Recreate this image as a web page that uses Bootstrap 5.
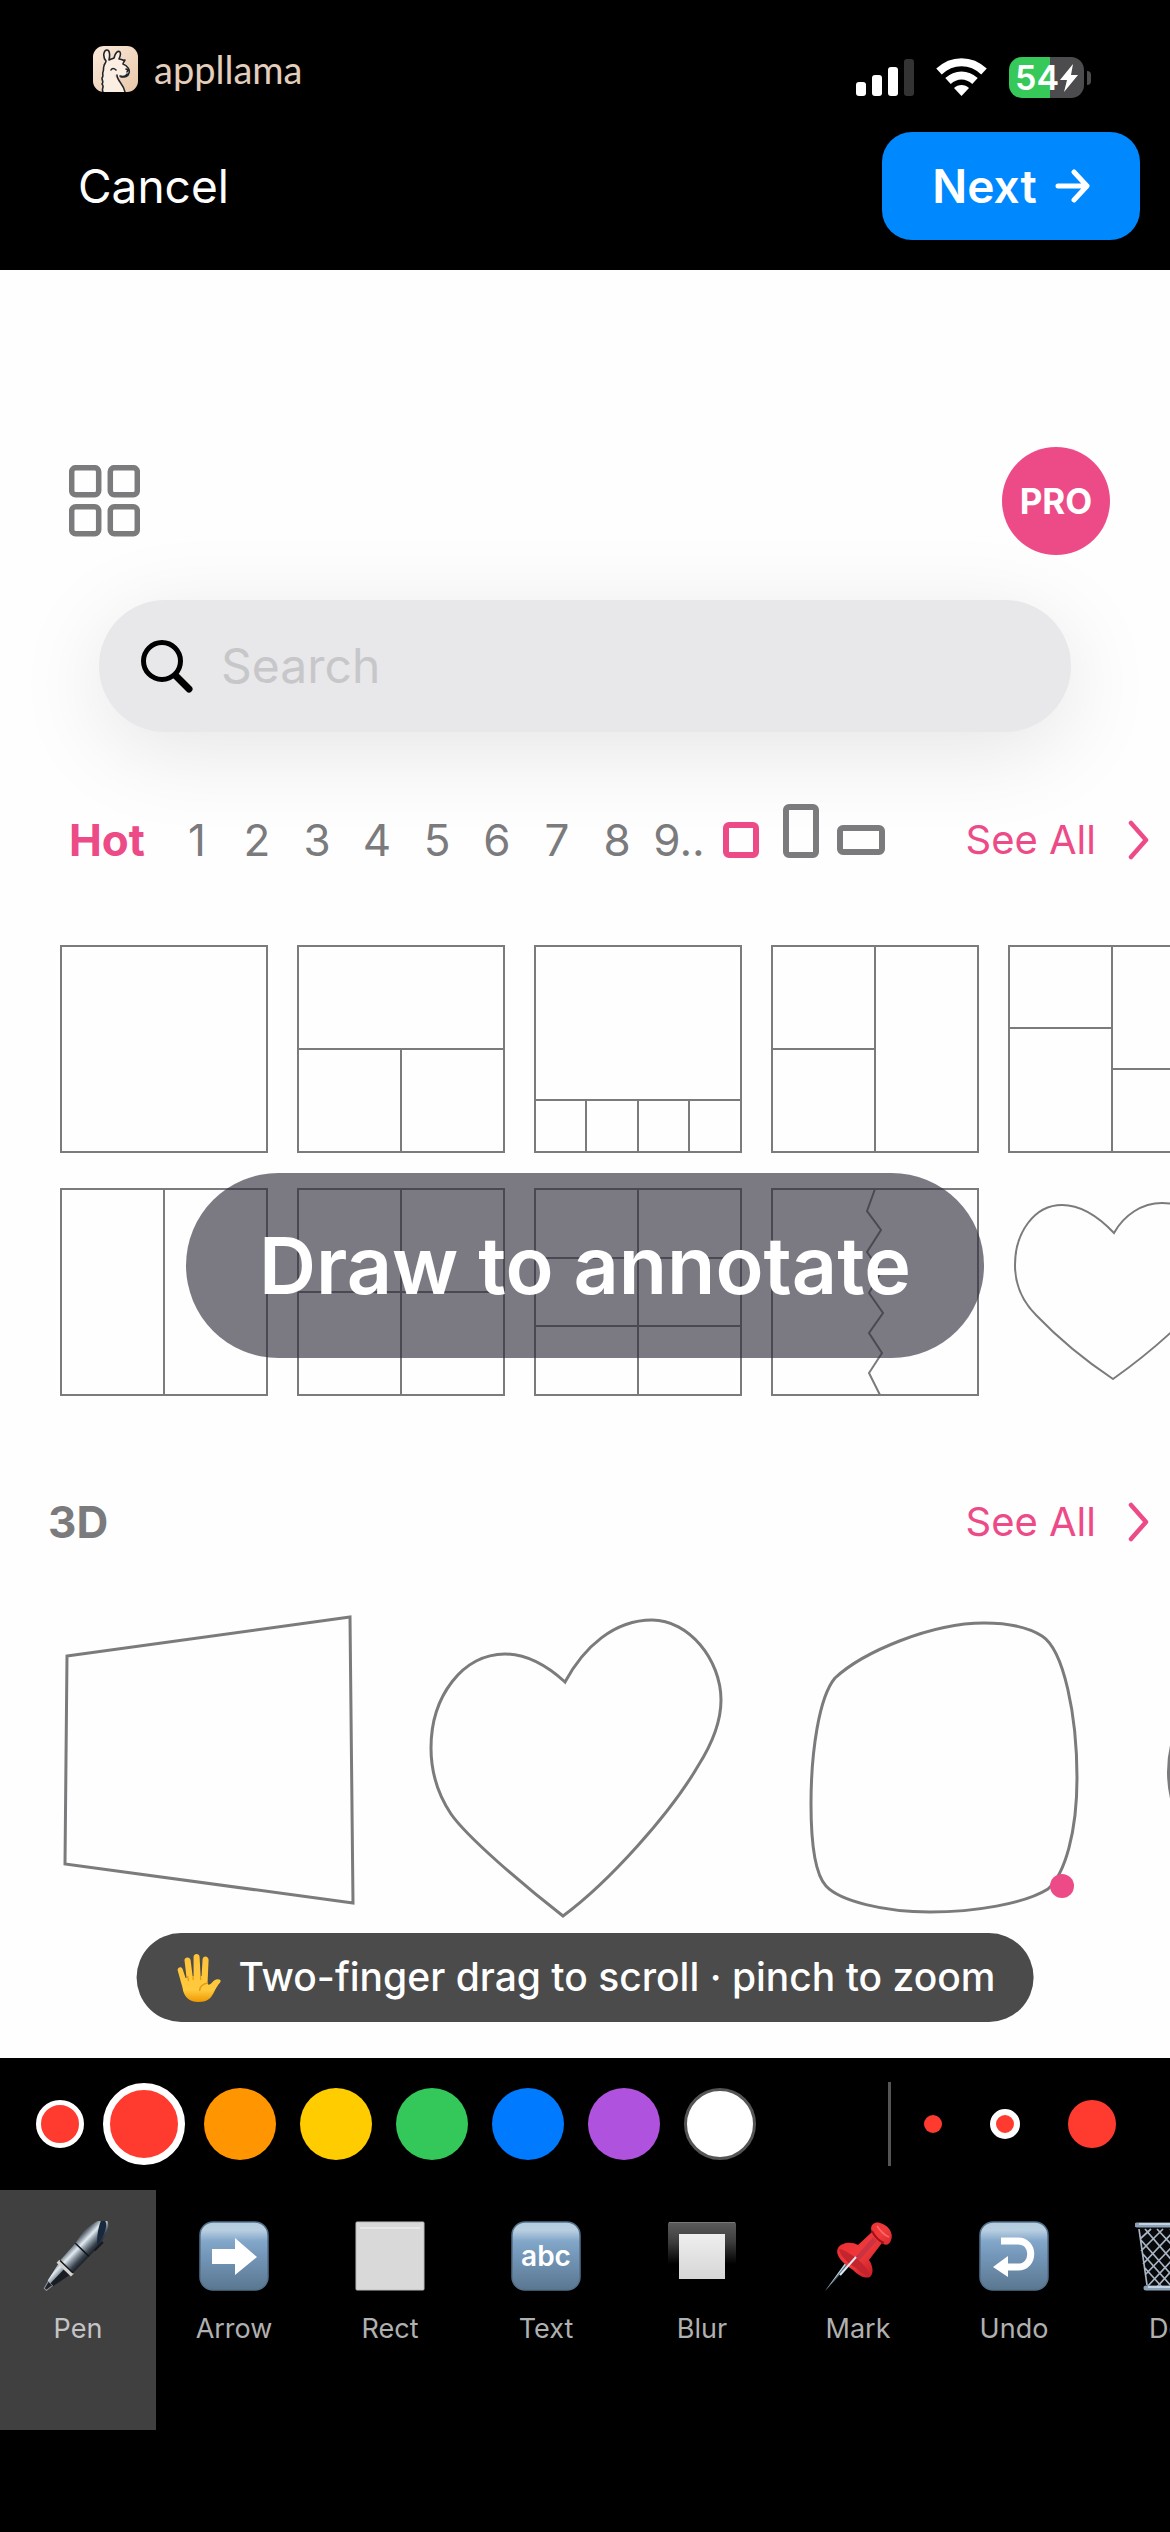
<!DOCTYPE html>
<html lang="en">
<head>
<meta charset="utf-8">
<meta name="viewport" content="width=device-width, initial-scale=1">
<title>Annotate</title>
<link href="https://cdn.jsdelivr.net/npm/bootstrap@5.3.0/dist/css/bootstrap.min.css" rel="stylesheet">
<style>
:root { --pink: #ed4b87; --ink: #7b7b7d; }
body { background: #000; font-family: Inter, "Liberation Sans", sans-serif; overflow-x: hidden; }
a { text-decoration: none; }
svg { display: block; flex: none; }
.bare { border: 0; background: none; padding: 0; color: inherit; }
.status-row { height: 132px; padding: 46px 79px 0 93px; }
.brand-name { font-family: Lato, sans-serif; font-size: 38px; line-height: 46px; color: #e3cdbb; }
.status-icons { gap: 22px; padding-top: 11px; }
.batt { width: 75px; height: 41px; border-radius: 13px; background: linear-gradient(90deg, #37c85a 41px, #4c4c4e 41px); color: #fff; font-size: 34px; font-weight: 600; line-height: 41px; padding-left: 6px; }
.nub { width: 4px; height: 14px; background: #4c4c4e; border-radius: 0 4px 4px 0; margin-left: 3px; }
.actions { height: 138px; padding: 0 30px 30px 78px; }
.cancel { font-size: 46px; line-height: 60px; color: #fff; }
.next { width: 258px; height: 108px; border-radius: 30px; background: #0088ff; color: #fff; font-size: 46px; font-weight: 600; gap: 18px; }
.sheet { background: #fefefe; padding-top: 177px; height: 1788px; }
.top-row { height: 108px; padding: 0 60px 0 69px; }
.pro { width: 108px; height: 108px; background: var(--pink); color: #fff; font-size: 35px; font-weight: 700; }
.search-box { margin: 45px 99px 0; height: 132px; border-radius: 66px; background: #e8e8ea; padding: 0 42px; gap: 26px; box-shadow: 0 18px 90px rgba(0,0,0,.1); }
.search-box input { font-size: 48px; background: none; border: 0; outline: 0; min-width: 0; color: #000; }
.search-box input::placeholder { color: #c7c7c9; opacity: 1; }
.tabs-row { height: 60px; margin-top: 78px; padding: 0 21px 0 69px; font-size: 44px; line-height: 60px; color: var(--ink); }
.hot { width: 98px; color: var(--pink); font-weight: 700; }
.num { width: 60px; text-align: center; }
.nine { width: 64px; text-align: center; }
.ratio-icons { margin-left: 9px; }
.pinked, .pinked:hover { color: var(--pink); }
.see { gap: 32px; font-size: 40px; line-height: 60px; }
.tiles { margin-top: 75px; padding-left: 60px; gap: 35px; overflow: hidden; }
.tile-row { gap: 29px; }
.tiles svg, .shapes svg { fill: none; stroke: var(--ink); }
.tiles svg { stroke-width: 2; }
.threed { height: 60px; margin-top: 96px; padding: 0 21px 0 48px; font-size: 44px; font-weight: 700; line-height: 60px; color: var(--ink); }
.threed a { font-weight: 400; }
.shapes { margin-top: 56px; padding-left: 60px; gap: 72px; overflow: hidden; }
.shapes svg { stroke-width: 3; }
.banner { top: 903px; height: 185px; padding: 0 73px; border-radius: 93px; background: rgba(46,45,59,.63); color: #fff; font-size: 79px; font-weight: 600; white-space: nowrap; }
.hint { bottom: 36px; height: 89px; padding: 0 38px 0 40px; border-radius: 45px; background: #4b4b4b; color: #fff; font-size: 39px; font-weight: 500; gap: 18px; white-space: nowrap; }
.mid { left: 50%; transform: translateX(-50%); }
.palette { height: 132px; padding: 0 54px 0 36px; }
.colours { gap: 24px; margin-left: 19px; }
.sizes { gap: 48px; margin-left: 33px; }
.dot { border-radius: 50%; padding: 0; border: 0 solid #fff; flex: none; }
.d18 { width: 18px; height: 18px; }
.d30 { width: 30px; height: 30px; border-width: 6px; }
.d48 { width: 48px; height: 48px; }
.d72 { width: 72px; height: 72px; }
.d82 { width: 82px; height: 82px; border-width: 7px; margin-right: -5px; }
.ringed { border-width: 5px; }
.red { background: #ff3b30; } .orange { background: #ff9500; } .yellow { background: #ffcc00; } .green { background: #34c759; }
.blue { background: #007aff; } .purple { background: #af52de; } .white { background: #fff; border: 3px solid #555; }
.rule { width: 3px; height: 84px; background: #555; }
.tools { height: 240px; overflow: hidden; }
.tool { width: 156px; flex: none; padding-top: 31px; color: #b0b0b0; font-size: 27px; line-height: 36px; gap: 20px; }
.tool.active { background: #404040; color: #c4c4c4; }
.home-bar { height: 102px; }
</style>
<script src="https://cdn.jsdelivr.net/npm/bootstrap@5.3.0/dist/js/bootstrap.bundle.min.js"></script>
</head>
<body>
<header>
  <div class="status-row d-flex justify-content-between align-items-start">
    <div class="d-flex align-items-center gap-3">
      <svg width="45" height="46" viewBox="0 0 45 46"><defs><linearGradient id="lg" x1="0" y1="0" x2="1" y2="1"><stop offset="0" stop-color="#fbeadb"/><stop offset="1" stop-color="#e8c7a9"/></linearGradient></defs><rect width="45" height="46" rx="11" fill="url(#lg)"/><path d="M10 46C8 42 12 41 9 38c2-2 0-3 0-6 2-2 0-4 1-6 1-2 0-4 1-6 0-2 2-3 2-5-4-5-2-11 1-11s3 6 2 10c2-1 3-1 5-2 1-5 4-8 6-6 1 2 0 5-1 7 3 0 4 2 6 1-1 2-2 3-2 4 5 2 7 6 6 9-1 4-4 4-8 4-3 0-5-2-7-3 2 6 8 7 12 18z" fill="#fbeee2"/><path d="M10 46C8 42 12 41 9 38c2-2 0-3 0-6 2-2 0-4 1-6 1-2 0-4 1-6 0-2 2-3 2-5-4-5-2-11 1-11s3 6 2 10c2-1 3-1 5-2 1-5 4-8 6-6 1 2 0 5-1 7 3 0 4 2 6 1-1 2-2 3-2 4 5 2 7 6 6 9-1 4-4 4-8 4M24 29c0 6 6 8 8 17M18 24c1-2 3-2 5 0M33 23l2 1-1 2M27 30c3 1 6 0 7-2" fill="none" stroke="#22262c" stroke-width="1.6" stroke-linejoin="round" stroke-linecap="round"/></svg>
      <span class="brand-name">appllama</span>
    </div>
    <div class="status-icons d-flex">
      <svg width="58" height="41" viewBox="0 0 58 41" fill="#fff"><rect y="25" width="10" height="14" rx="3"/><rect x="16" y="18" width="10" height="21" rx="3"/><rect x="32" y="10" width="10" height="29" rx="3"/><rect x="48" y="2" width="10" height="37" rx="3" fill="#333"/></svg>
      <svg width="51" height="41" viewBox="0 0 51 41" fill="none" stroke="#fff" stroke-width="8"><path d="M3 14.500C16 2 35 2 48 14.500M12 24c8-7.500 19-7.500 27 0"/><path d="M25.500 39l-7.500-8c4-4 11-4 15 0z" fill="#fff" stroke="none"/></svg>
      <div class="d-flex align-items-center">
        <div class="batt d-flex align-items-center">54<svg width="20" height="28" viewBox="0 0 20 28" fill="#fff"><path d="M14 0L1 16h7L5 28 19 11h-7z"/></svg></div>
        <div class="nub"></div>
      </div>
    </div>
  </div>
  <nav class="actions d-flex justify-content-between align-items-center">
    <button class="bare cancel" type="button">Cancel</button>
    <button class="bare next d-flex align-items-center justify-content-center" type="button">Next<svg width="35" height="34" viewBox="0 0 35 34" fill="none" stroke="#fff" stroke-width="5" stroke-linecap="round" stroke-linejoin="round"><path d="M3 17h28M19 3l13 14-13 14"/></svg></button>
  </nav>
</header>

<main class="sheet position-relative overflow-hidden">
  <div class="top-row d-flex justify-content-between align-items-center">
    <button class="bare" type="button" aria-label="Layouts"><svg width="71" height="72" viewBox="0 0 71 72" fill="none" stroke="#7b7b7d" stroke-width="5.500"><rect x="2.700" y="2.700" width="27" height="27" rx="4"/><rect x="41.300" y="2.700" width="27" height="27" rx="4"/><rect x="2.700" y="41.700" width="27" height="27" rx="4"/><rect x="41.300" y="41.700" width="27" height="27" rx="4"/></svg></button>
    <button class="bare pro rounded-circle" type="button">PRO</button>
  </div>
  <label class="search-box d-flex align-items-center">
    <svg width="52" height="53" viewBox="0 0 52 53" fill="none" stroke="#000" stroke-width="5"><circle cx="21" cy="21" r="18.500"/><path d="M35 36l13 13" stroke-width="7" stroke-linecap="round"/></svg>
    <input class="flex-grow-1" type="text" placeholder="Search" aria-label="Search">
  </label>
  <div class="tabs-row d-flex align-items-center">
    <span class="hot">Hot</span>
    <span class="num">1</span><span class="num">2</span><span class="num">3</span><span class="num">4</span><span class="num">5</span><span class="num">6</span><span class="num">7</span><span class="num">8</span><span class="nine">9..</span>
    <svg class="ratio-icons" width="170" height="92" viewBox="0 8 170 92" fill="none" stroke="#7b7b7d" stroke-width="6"><rect x="6" y="39" width="30" height="30" rx="3" stroke="#ed4b87"/><rect x="66" y="21" width="30" height="48" rx="3"/><rect x="120" y="42" width="42" height="24" rx="3"/></svg>
    <a class="see pinked d-flex align-items-center ms-auto" href="#">See All<svg width="21" height="40" viewBox="0 0 21 40" fill="none" stroke="currentColor" stroke-width="4.500" stroke-linecap="round" stroke-linejoin="round"><path d="M3 3l15 17L3 37"/></svg></a>
  </div>
  <div class="tiles d-flex flex-column">
    <div class="tile-row d-flex">
      <svg width="208" height="208"><path d="M1 1h206v206H1z"/></svg>
      <svg width="208" height="208"><path d="M1 1h206v206H1zM1 104h206M104 104v103"/></svg>
      <svg width="208" height="208"><path d="M1 1h206v206H1zM1 155h206M52 155v52M104 155v52M155 155v52"/></svg>
      <svg width="208" height="208"><path d="M1 1h206v206H1zM104 1v206M1 104h103"/></svg>
      <svg width="208" height="208"><path d="M1 1h206v206H1zM104 1v206M1 83h103M104 124h103"/></svg>
    </div>
    <div class="tile-row d-flex">
      <svg width="208" height="208"><path d="M1 1h206v206H1zM104 1v206"/></svg>
      <svg width="208" height="208"><path d="M1 1h206v206H1zM104 1v206M1 104h206"/></svg>
      <svg width="208" height="208"><path d="M1 1h206v206H1zM104 1v206M1 70h206M1 138h206"/></svg>
      <svg width="208" height="208"><path d="M1 1h206v206H1zM104 1L96 23l14 19-14 22 14 20-12 21 14 20-14 20 13 20-13 20 11 22"/></svg>
      <svg width="208" height="208"><path d="M106 45C86 24 68 17 54 17 26 17 7 45 7 77c0 22 9 38 21 50 22 23 50 46 77 64 24-17 53-41 74-62 15-18 25-35 25-57 0-32-20-57-50-57-20 0-38 12-48 30z"/></svg>
    </div>
  </div>
  <div class="threed d-flex align-items-center justify-content-between">
    <span>3D</span>
    <a class="see pinked d-flex align-items-center" href="#">See All<svg width="21" height="40" viewBox="0 0 21 40" fill="none" stroke="currentColor" stroke-width="4.500" stroke-linecap="round" stroke-linejoin="round"><path d="M3 3l15 17L3 37"/></svg></a>
  </div>
  <div class="shapes d-flex">
    <svg width="296" height="310"><path d="M7 48L290 9l3 286L5 256z"/></svg>
    <svg width="300" height="310"><path d="M137 74C115 54 95 46 77 46 35 46 3 88 3 140c0 28 8 48 20 66 16 23 72 71 112 102 46-34 107-102 135-150 14-22 23-44 23-66 0-40-32-80-69-80-38 0-68 27-87 62z"/></svg>
    <svg width="280" height="310"><path d="M35 70c28-26 96-55 149-55 24 0 44 4 58 13 22 14 35 80 35 142 0 54-12 96-29 111-24 15-74 23-118 23-46 0-90-11-104-26-11-12-15-44-15-82 0-52 8-107 24-126z"/><circle cx="262" cy="278" r="12" fill="#ed4b87" stroke="none"/></svg>
    <svg width="260" height="310"><ellipse cx="140" cy="164" rx="123" ry="120" stroke-width="4"/></svg>
  </div>
  <div class="banner mid position-absolute d-flex align-items-center">Draw to annotate</div>
  <div class="hint mid position-absolute d-flex align-items-center">
    <svg width="44" height="48" viewBox="0 0 44 48"><defs><linearGradient id="hg" x1="0" y1="0" x2="0" y2="1"><stop offset="0" stop-color="#ffc23a"/><stop offset=".75" stop-color="#ffca3d"/><stop offset="1" stop-color="#ee9800"/></linearGradient></defs><path d="M1 16c0-3 4-4 5-1l3 9h1L8 7c-1-4 5-5 6-1l2 16h1V3c0-4 6-4 6 0l1 19h1l1-17c1-4 6-3 6 1l-1 22c0 4 2 3 4 1 3-4 7-5 10-2-4 4-6 8-8 12-3 6-7 9-15 9-10 0-15-6-16-14z" fill="url(#hg)"/><path d="M11 22l1 5M16.500 22v4M24 22v4M31 29c-5 1-8 4-8 8" stroke="#e49a18" stroke-width="1.300" fill="none"/></svg>
    <span>Two-finger drag to scroll · pinch to zoom</span>
  </div>
</main>

<footer>
  <div class="palette d-flex align-items-center">
    <button class="dot d48 ringed red" type="button" aria-label="Current colour"></button>
    <div class="colours d-flex align-items-center">
      <button class="dot d82 red" type="button" aria-label="Red"></button>
      <button class="dot d72 orange" type="button" aria-label="Orange"></button>
      <button class="dot d72 yellow" type="button" aria-label="Yellow"></button>
      <button class="dot d72 green" type="button" aria-label="Green"></button>
      <button class="dot d72 blue" type="button" aria-label="Blue"></button>
      <button class="dot d72 purple" type="button" aria-label="Purple"></button>
      <button class="dot d72 white" type="button" aria-label="White"></button>
    </div>
    <div class="rule ms-auto"></div>
    <div class="sizes d-flex align-items-center">
      <button class="dot d18 red" type="button" aria-label="Thin"></button>
      <button class="dot d30 red" type="button" aria-label="Medium"></button>
      <button class="dot d48 red" type="button" aria-label="Thick"></button>
    </div>
  </div>
  <svg width="0" height="0" class="position-absolute" aria-hidden="true"><defs>
    <linearGradient id="key" x1="0" y1="0" x2="0" y2="1"><stop offset="0" stop-color="#b4cde0"/><stop offset=".12" stop-color="#b9cfe1"/><stop offset=".28" stop-color="#83a7c9"/><stop offset=".5" stop-color="#7497b9"/><stop offset="1" stop-color="#5a7790"/></linearGradient>
    <linearGradient id="steel" gradientUnits="userSpaceOnUse" x1="0" y1="-11" x2="0" y2="10"><stop offset="0" stop-color="#59636e"/><stop offset=".3" stop-color="#e2ebf1"/><stop offset=".5" stop-color="#8d98a3"/><stop offset=".75" stop-color="#39424d"/><stop offset="1" stop-color="#14181f"/></linearGradient>
    <linearGradient id="frame" x1="0" y1="0" x2="0" y2="1"><stop offset="0" stop-color="#5c5c5c"/><stop offset=".3" stop-color="#3c3c3c"/><stop offset=".62" stop-color="#000"/></linearGradient>
    <linearGradient id="pane" x1="0" y1="0" x2="0" y2="1"><stop offset="0" stop-color="#eee"/><stop offset="1" stop-color="#d6d6d6"/></linearGradient>
    <linearGradient id="pin" x1="0" y1="0" x2="1" y2="1"><stop offset="0" stop-color="#e8232a"/><stop offset=".5" stop-color="#f03a3c"/><stop offset="1" stop-color="#b30f18"/></linearGradient>
  </defs></svg>
  <div class="tools d-flex">
    <button class="bare tool active d-flex flex-column align-items-center" type="button">
      <svg width="70" height="70" viewBox="0 0 70 70"><g transform="translate(2 68) rotate(-46)"><path d="M0-1L8-3v6L0 2z" fill="#20242a" stroke="#8d949c"/><path d="M8-4L28-8V8L8 4z" fill="url(#steel)"/><path d="M8 0h20v8L8 4z" fill="#191d23"/><path d="M31-9L54-10V9L31 9z" fill="url(#steel)"/><path d="M54-10C70-14 88-11 92-5c3 7-14 15-38 14z" fill="url(#steel)"/><path d="M90-8c5 6-8 14-22 15 6-7 16-13 22-15z" fill="#18283d"/><path d="M27-10h4V10h-4z" fill="#d2d2cf"/><path d="M31-9V9M54-10V9" stroke="#12161b" stroke-width="1.500"/><path d="M62 9h12" stroke="#14181f" stroke-width="2"/></g></svg>
      Pen</button>
    <button class="bare tool d-flex flex-column align-items-center" type="button">
      <svg width="70" height="70" viewBox="0 0 70 70"><rect x="1" y="1" width="68" height="68" rx="13" fill="url(#key)" stroke="#54708a" stroke-width="1.500"/><path d="M13 28h23V17l22 19-22 18V43H13z" fill="#fff"/></svg>
      Arrow</button>
    <button class="bare tool d-flex flex-column align-items-center" type="button">
      <svg width="70" height="70" viewBox="0 0 70 70"><rect x="1" y="1" width="68" height="68" rx="1" fill="#d9d9d9" stroke="#bcbcbc"/><path d="M5 7h60" stroke="#e8e8e8" stroke-width="2"/></svg>
      Rect</button>
    <button class="bare tool d-flex flex-column align-items-center" type="button">
      <svg width="70" height="70" viewBox="0 0 70 70"><rect x="1" y="1" width="68" height="68" rx="13" fill="url(#key)" stroke="#54708a" stroke-width="1.500"/><text x="35" y="45" text-anchor="middle" font-family="Inter, sans-serif" font-size="28" font-weight="600" fill="#fff">abc</text></svg>
      Text</button>
    <button class="bare tool d-flex flex-column align-items-center" type="button">
      <svg width="70" height="70" viewBox="0 0 70 70"><rect x="1" y="1" width="68" height="68" rx="2" fill="url(#frame)"/><path d="M2 1.500h66" stroke="#777"/><path d="M12 13h46v45H12z" fill="url(#pane)"/></svg>
      Blur</button>
    <button class="bare tool d-flex flex-column align-items-center" type="button">
      <svg width="70" height="70" viewBox="0 0 70 70"><path d="M31 37L2 70l26-36z" fill="#c9dce6"/><path d="M2 70l29-32-2-2z" fill="#4d6674"/><path d="M15 27c3-5 13-7 20-3l14-13c-3-6 2-11 8-9 8 2 14 10 11 17-1 5-6 6-9 3L46 39c4 6 5 13 1 17-5 2-11-1-17-7-8-5-19-14-15-22z" fill="url(#pin)"/><path d="M49 10c3 6 7 10 12 12" fill="none" stroke="#a60f16" stroke-width="2"/><path d="M54 5c4 6 7 9 12 11" fill="none" stroke="#ff6a64" stroke-width="1.500"/><path d="M16 28c9 1 29 17 31 26-4 1-9-2-14-7C25 42 17 35 16 28z" fill="#c3242d"/><path d="M52 18L34 38" stroke="#b33048" stroke-width="5" opacity=".6"/><path d="M33 36L17 54" stroke="#dceaf0" stroke-width="2"/></svg>
      Mark</button>
    <button class="bare tool d-flex flex-column align-items-center" type="button">
      <svg width="70" height="70" viewBox="0 0 70 70"><rect x="1" y="1" width="68" height="68" rx="13" fill="url(#key)" stroke="#54708a" stroke-width="1.500"/><path d="M22 20h17c17 0 17 26 0 26H27" fill="none" stroke="#fff" stroke-width="7"/><path d="M14 46l15-11v21z" fill="#fff"/></svg>
      Undo</button>
    <button class="bare tool d-flex flex-column align-items-center" type="button">
      <svg width="70" height="70" viewBox="0 0 70 70"><path d="M4 6h62l-8 61H12z" fill="#08090b"/><path d="M4 8l8 56M10 8l48 56M5 18l42 48M7 32l30 34M9 46l18 20M22 8l39 42M35 8l29 30M48 8l18 20M66 8L12 66M54 8L10 54M41 8L8 43M28 8L6 30M16 8L5 18M63 20L22 66M62 36L36 66M60 52L48 66M66 8l-8 56" stroke="#a9b5c4" stroke-width="1.700" fill="none"/><path d="M2 4h66M11 67h48" stroke="#8ba1b8" stroke-width="5" stroke-linecap="round"/><path d="M4 3h62M13 66h44" stroke="#d5e3ef" stroke-width="1.500"/></svg>
      Del</button>
  </div>
  <div class="home-bar"></div>
</footer>
</body>
</html>
